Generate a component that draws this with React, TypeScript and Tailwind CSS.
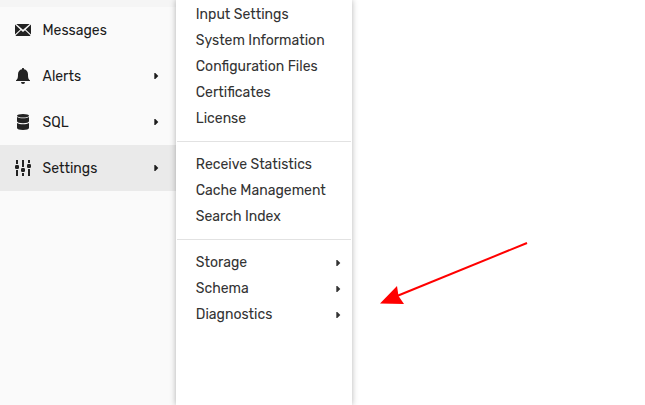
import type { ReactNode } from "react";

const Caret = () => (
  <svg width="5" height="8" viewBox="0 0 5 8" className="shrink-0">
    <path d="M.3 1h1L4.300 4 1.300 7h-1Z" fill="currentColor" />
  </svg>
);

const MailIcon = () => (
  <svg width="16" height="12" viewBox="0 0 16 12" fill="#222222">
    <path d="M1.300 0h13.400L8 5.700ZM0 .6 5.300 5.500 0 10.600ZM16 .6v10l-5.300-5.100ZM6 6.200 8 7.900l2-1.700 5.500 5.300-.7.5H1.200l-.7-.5Z" />
  </svg>
);

const BellIcon = () => (
  <svg width="14" height="16" viewBox="0 0 14 16" fill="#222222">
    <path d="M6 .9a1 1 0 0 1 2 0V1.300c2.500.4 4 2.400 4 4.900 0 4.200.6 5 2 6v.8H0v-.8c1.400-1 2-1.800 2-6 0-2.500 1.500-4.500 4-4.900ZM5 14h4a2 2 0 0 1-4 0Z" />
  </svg>
);

const DatabaseIcon = () => (
  <svg width="12" height="16" viewBox="0 0 12 16" fill="#222222">
    <ellipse cx="6" cy="1.800" rx="6" ry="1.700" />
    <path d="M0 3c1.200.9 3.500 1.300 6 1.300S10.800 3.900 12 3v4.200c0 1.200-2.600 2-6 2s-6-.8-6-2Z" />
    <path d="M0 9c1.200.9 3.500 1.300 6 1.300s4.800-.4 6-1.300v5c0 1.200-2.600 2-6 2s-6-.8-6-2Z" />
  </svg>
);

const SlidersIcon = () => (
  <svg width="16" height="16" viewBox="0 0 16 16" fill="#222222">
    <path d="M1 0h2v4H1ZM1 10h2v6H1ZM7 0h2v7H7ZM7 13h2v3H7ZM13 0h2v3h-2ZM13 9h2v7h-2Z" />
    <rect x="0" y="5" width="4" height="4" rx="1.200" />
    <rect x="6" y="8" width="4" height="4" rx="1.200" />
    <rect x="12" y="4" width="4" height="4" rx="1.200" />
  </svg>
);

type Item = { label: string; more?: boolean };

const sidebar: (Item & { icon: ReactNode; active?: boolean })[] = [
  { label: "Messages", icon: <MailIcon /> },
  { label: "Alerts", icon: <BellIcon />, more: true },
  { label: "SQL", icon: <DatabaseIcon />, more: true },
  { label: "Settings", icon: <SlidersIcon />, more: true, active: true },
];

const groups: Item[][] = [
  [
    { label: "Input Settings" },
    { label: "System Information" },
    { label: "Configuration Files" },
    { label: "Certificates" },
    { label: "License" },
  ],
  [{ label: "Receive Statistics" }, { label: "Cache Management" }, { label: "Search Index" }],
  [
    { label: "Storage", more: true },
    { label: "Schema", more: true },
    { label: "Diagnostics", more: true },
  ],
];

export default function App() {
  return (
    <div className="relative flex h-[405px] w-[645px] overflow-hidden bg-white font-['Rubik','Roboto',sans-serif] text-[14px] leading-[26px] text-[#1c1c1c]">
      <nav className="w-44 shrink-0 bg-[#fafafa]">
        <div className="h-[7px] bg-[#f5f5f5]" />
        {sidebar.map((item) => (
          <a
            key={item.label}
            className={`flex h-[46px] items-center pr-[17px] ${item.active ? "bg-[#eaeaea]" : ""}`}
          >
            <span className="ml-[15px] flex w-4 justify-center">{item.icon}</span>
            <span className="ml-[11.5px] flex-1 pt-[2px]">{item.label}</span>
            {item.more && <Caret />}
          </a>
        ))}
      </nav>
      <div className="relative w-44 shrink-0 bg-white px-px pt-px text-[#333333] shadow-[0_0_6px_rgba(0,0,0,0.3)]">
        {groups.map((group, i) => (
          <div key={i} className={i > 0 ? "mt-[10px] border-t border-[#e2e2e2] pt-[9px]" : ""}>
            {group.map((item) => (
              <a key={item.label} className="flex h-[26px] items-center pr-[10px] pl-[18.800px]">
                <span className="flex-1 pt-[2px] whitespace-nowrap">{item.label}</span>
                {item.more && (
                  <span className="flex pt-[2px]">
                    <Caret />
                  </span>
                )}
              </a>
            ))}
          </div>
        ))}
      </div>
      <svg className="absolute top-[235px] left-[370px]" width="170" height="80" viewBox="370 235 170 80">
        <path d="M527 243 397 296" stroke="#f00" strokeWidth="2" />
        <path d="m380 303.500 17-17.500 1.500 10 5.500 8Z" fill="#f00" />
      </svg>
    </div>
  );
}
